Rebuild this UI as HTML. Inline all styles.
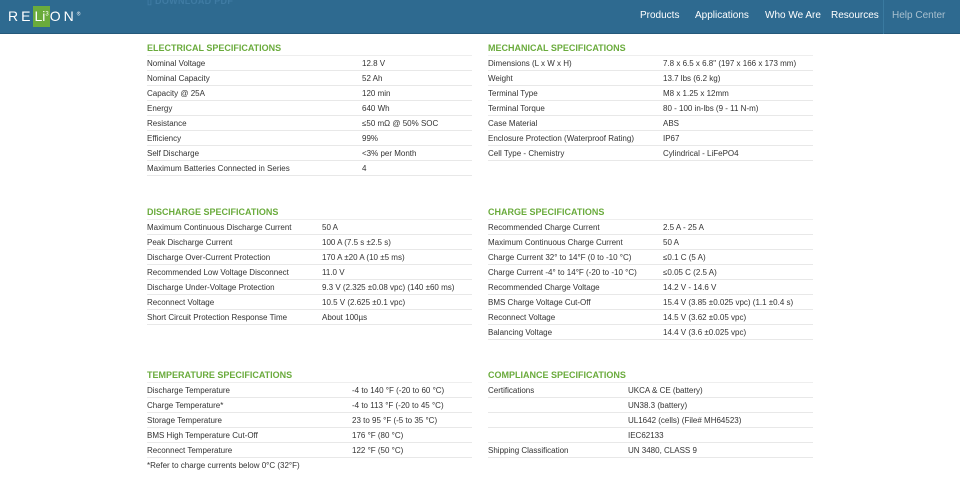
<!DOCTYPE html><html><head><style>
*{margin:0;padding:0;box-sizing:border-box}
body{width:960px;height:498px;background:#fff;font-family:"Liberation Sans",sans-serif;position:relative;overflow:hidden;color:#333}
.hdr{position:absolute;left:0;top:0;width:960px;height:34px;background:#2e6a90;border-bottom:1px solid #25597a}
.logo{position:absolute;left:8px;top:8px;font-size:14px;color:#fff;letter-spacing:3px;font-weight:400}
.logo .li{background:#6aab3c;padding:2px 1px 3px 1px;letter-spacing:0}
.dl{position:absolute;left:147px;top:-4px;font-size:9px;font-weight:bold;color:#3f7ba3;letter-spacing:.3px}
.nav{position:absolute;top:10px;font-size:10px;color:#fff}
.sec{position:absolute;width:325px}
.h{height:16px;line-height:17px;border-bottom:1px solid #eee;color:#6aab3c;font-weight:bold;font-size:9px}
.r{height:15px;line-height:16px;border-bottom:1px solid #e8e8e8;font-size:8px;position:relative}
.r span{position:absolute;top:0}
.n{border-bottom:none}
</style></head><body>
<div class="hdr">
<div class="logo">RE<span class="li">Li<sup style="font-size:6px">3</sup></span>ON<sup style="font-size:5px">®</sup></div>
<div class="dl">▯ DOWNLOAD PDF</div>
<div class="nav" style="left:640px">Products</div>
<div class="nav" style="left:695px">Applications</div>
<div class="nav" style="left:765px">Who We Are</div>
<div class="nav" style="left:831px">Resources</div>
<div style="position:absolute;left:883px;top:0;width:1px;height:34px;background:#3a7aa0"></div>
<div class="nav" style="left:892px;color:#a9c0cf">Help Center</div>
</div>

<div class="sec" style="left:147px;top:40px">
<div class="h">ELECTRICAL SPECIFICATIONS</div>
<div class="r">Nominal Voltage<span style="left:215px">12.8 V</span></div>
<div class="r">Nominal Capacity<span style="left:215px">52 Ah</span></div>
<div class="r">Capacity @ 25A<span style="left:215px">120 min</span></div>
<div class="r">Energy<span style="left:215px">640 Wh</span></div>
<div class="r">Resistance<span style="left:215px">≤50 mΩ @ 50% SOC</span></div>
<div class="r">Efficiency<span style="left:215px">99%</span></div>
<div class="r">Self Discharge<span style="left:215px">&lt;3% per Month</span></div>
<div class="r">Maximum Batteries Connected in Series<span style="left:215px">4</span></div>
</div>

<div class="sec" style="left:488px;top:40px">
<div class="h">MECHANICAL SPECIFICATIONS</div>
<div class="r">Dimensions (L x W x H)<span style="left:175px">7.8 x 6.5 x 6.8" (197 x 166 x 173 mm)</span></div>
<div class="r">Weight<span style="left:175px">13.7 lbs (6.2 kg)</span></div>
<div class="r">Terminal Type<span style="left:175px">M8 x 1.25 x 12mm</span></div>
<div class="r">Terminal Torque<span style="left:175px">80 - 100 in-lbs (9 - 11 N-m)</span></div>
<div class="r">Case Material<span style="left:175px">ABS</span></div>
<div class="r">Enclosure Protection (Waterproof Rating)<span style="left:175px">IP67</span></div>
<div class="r">Cell Type - Chemistry<span style="left:175px">Cylindrical - LiFePO4</span></div>
</div>

<div class="sec" style="left:147px;top:204px">
<div class="h">DISCHARGE SPECIFICATIONS</div>
<div class="r">Maximum Continuous Discharge Current<span style="left:175px">50 A</span></div>
<div class="r">Peak Discharge Current<span style="left:175px">100 A (7.5 s ±2.5 s)</span></div>
<div class="r">Discharge Over-Current Protection<span style="left:175px">170 A ±20 A (10 ±5 ms)</span></div>
<div class="r">Recommended Low Voltage Disconnect<span style="left:175px">11.0 V</span></div>
<div class="r">Discharge Under-Voltage Protection<span style="left:175px">9.3 V (2.325 ±0.08 vpc) (140 ±60 ms)</span></div>
<div class="r">Reconnect Voltage<span style="left:175px">10.5 V (2.625 ±0.1 vpc)</span></div>
<div class="r">Short Circuit Protection Response Time<span style="left:175px">About 100µs</span></div>
</div>

<div class="sec" style="left:488px;top:204px">
<div class="h">CHARGE SPECIFICATIONS</div>
<div class="r">Recommended Charge Current<span style="left:175px">2.5 A - 25 A</span></div>
<div class="r">Maximum Continuous Charge Current<span style="left:175px">50 A</span></div>
<div class="r">Charge Current 32° to 14°F (0 to -10 °C)<span style="left:175px">≤0.1 C (5 A)</span></div>
<div class="r">Charge Current -4° to 14°F (-20 to -10 °C)<span style="left:175px">≤0.05 C (2.5 A)</span></div>
<div class="r">Recommended Charge Voltage<span style="left:175px">14.2 V - 14.6 V</span></div>
<div class="r">BMS Charge Voltage Cut-Off<span style="left:175px">15.4 V (3.85 ±0.025 vpc) (1.1 ±0.4 s)</span></div>
<div class="r">Reconnect Voltage<span style="left:175px">14.5 V (3.62 ±0.05 vpc)</span></div>
<div class="r">Balancing Voltage<span style="left:175px">14.4 V (3.6 ±0.025 vpc)</span></div>
</div>

<div class="sec" style="left:147px;top:367px">
<div class="h">TEMPERATURE SPECIFICATIONS</div>
<div class="r">Discharge Temperature<span style="left:205px">-4 to 140 °F (-20 to 60 °C)</span></div>
<div class="r">Charge Temperature*<span style="left:205px">-4 to 113 °F (-20 to 45 °C)</span></div>
<div class="r">Storage Temperature<span style="left:205px">23 to 95 °F (-5 to 35 °C)</span></div>
<div class="r">BMS High Temperature Cut-Off<span style="left:205px">176 °F (80 °C)</span></div>
<div class="r">Reconnect Temperature<span style="left:205px">122 °F (50 °C)</span></div>
<div class="r n">*Refer to charge currents below 0°C (32°F)</div>
</div>

<div class="sec" style="left:488px;top:367px">
<div class="h">COMPLIANCE SPECIFICATIONS</div>
<div class="r">Certifications<span style="left:140px">UKCA &amp; CE (battery)</span></div>
<div class="r"><span style="left:140px">UN38.3 (battery)</span></div>
<div class="r"><span style="left:140px">UL1642 (cells) (File# MH64523)</span></div>
<div class="r"><span style="left:140px">IEC62133</span></div>
<div class="r">Shipping Classification<span style="left:140px">UN 3480, CLASS 9</span></div>
</div>
</body></html>
